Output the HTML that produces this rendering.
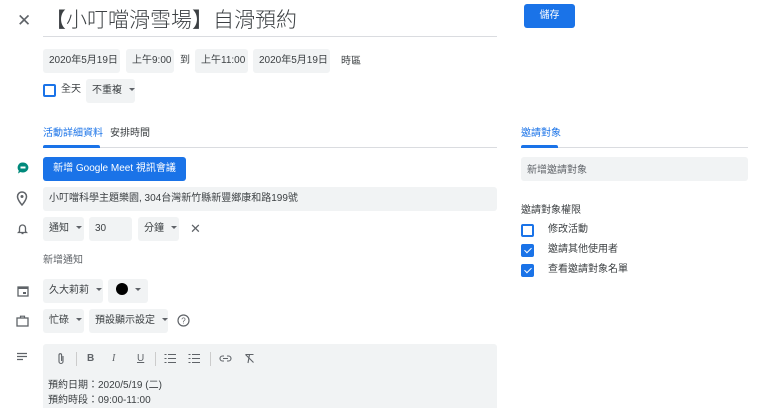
<!DOCTYPE html>
<html><head><meta charset="utf-8"><style>
*{margin:0;padding:0;box-sizing:border-box}
body{width:771px;height:408px;overflow:hidden;background:#fff;font-family:"Liberation Sans","Noto Sans CJK TC",sans-serif;color:#3c4043;position:relative;font-size:10px}
.a{position:absolute;line-height:12px;white-space:nowrap}
.chip{position:absolute;background:#f1f3f4;border-radius:3px;height:24px;line-height:24px;font-size:10px;padding-left:6px;color:#3c4043;white-space:nowrap}
.dd::after{content:"";display:inline-block;border:3px solid transparent;border-top:3px solid #5f6368;margin-left:7px;vertical-align:-1px}
.cb{position:absolute;width:13px;height:13px;border:2px solid #5f6368;border-radius:2px}
.cbb{border-color:#1a73e8}
.cbc{background:#1a73e8;border-color:#1a73e8}
.cbc::after{content:"";position:absolute;left:2.5px;top:0px;width:3px;height:6px;border:solid #fff;border-width:0 1.5px 1.5px 0;transform:rotate(45deg)}
svg{position:absolute}
</style></head><body>
<div class="a" style="left:17px;top:12px;font-size:17px;line-height:18px;color:#5f6368">✕</div>
<div class="a" style="left:45px;top:8px;font-size:21px;line-height:26px;color:#3c4043;font-weight:300">【小叮噹滑雪場】自滑預約</div>
<div class="a" style="left:43px;top:36px;width:454px;height:1px;background:#dadce0"></div>
<div class="a" style="left:524px;top:4px;width:51px;height:24px;background:#1a73e8;border-radius:3px;color:#fff;font-size:10px;line-height:24px;text-align:center">儲存</div>

<div class="chip" style="left:43px;top:49px;width:77px">2020年5月19日</div>
<div class="chip" style="left:126px;top:49px;width:48px">上午9:00</div>
<div class="a" style="left:180px;top:55px">到</div>
<div class="chip" style="left:195px;top:49px;width:53px">上午11:00</div>
<div class="chip" style="left:253px;top:49px;width:77px">2020年5月19日</div>
<div class="a" style="left:341px;top:56px">時區</div>

<div class="cb cbb" style="left:43px;top:84px"></div>
<div class="a" style="left:61px;top:84px">全天</div>
<div class="chip dd" style="left:86px;top:79px;width:49px">不重複</div>

<div class="a" style="left:43px;top:128px;color:#1a73e8">活動詳細資料</div>
<div class="a" style="left:110px;top:128px">安排時間</div>
<div class="a" style="left:43px;top:147px;width:454px;height:1px;background:#dadce0"></div>
<div class="a" style="left:43px;top:145px;width:57px;height:3px;background:#1a73e8;border-radius:2px 2px 0 0"></div>

<div class="a" style="left:521px;top:128px;color:#1a73e8">邀請對象</div>
<div class="a" style="left:521px;top:147px;width:227px;height:1px;background:#dadce0"></div>
<div class="a" style="left:521px;top:145px;width:37px;height:3px;background:#1a73e8;border-radius:2px 2px 0 0"></div>
<div class="chip" style="left:521px;top:157px;width:227px;color:#5f6368;padding-left:6px;line-height:28px">新增邀請對象</div>
<div class="a" style="left:521px;top:205px">邀請對象權限</div>
<div class="cb cbb" style="left:521px;top:224px"></div><div class="a" style="left:548px;top:224px">修改活動</div>
<div class="cb cbc" style="left:521px;top:244px"></div><div class="a" style="left:548px;top:244px">邀請其他使用者</div>
<div class="cb cbc" style="left:521px;top:264px"></div><div class="a" style="left:548px;top:264px">查看邀請對象名單</div>

<!-- icons -->
<svg style="left:16px;top:161px" width="14" height="14" viewBox="0 0 14 14"><path d="M7 1.5a5.5 5 0 1 1 -2.5 9.5l-2.5 1.5 .8-2.8A5 5 0 0 1 7 1.5z" fill="#00897b"/><rect x="4.5" y="5.5" width="5" height="2" fill="#fff"/></svg>
<svg style="left:16px;top:191px" width="12" height="15" viewBox="0 0 12 15"><path d="M6 1a4.5 4.5 0 0 0-4.5 4.5C1.5 9 6 14 6 14s4.5-5 4.5-8.5A4.5 4.5 0 0 0 6 1z" fill="none" stroke="#5f6368" stroke-width="1.5"/><circle cx="6" cy="5.5" r="1.5" fill="#5f6368"/></svg>
<svg style="left:17px;top:222px" width="11" height="13" viewBox="0 0 11 13"><path d="M2.5 9.5V6a3 3 0 0 1 6 0v3.5l1 1h-8z" fill="none" stroke="#5f6368" stroke-width="1.3"/><path d="M4.5 11.5h2" stroke="#5f6368" stroke-width="1.3"/></svg>
<svg style="left:17px;top:285px" width="12" height="12" viewBox="0 0 12 12"><rect x="1" y="2" width="10" height="9" fill="none" stroke="#5f6368" stroke-width="1.3"/><rect x="1" y="2" width="10" height="2" fill="#5f6368"/><rect x="6" y="7" width="3" height="2" fill="#5f6368"/></svg>
<svg style="left:16px;top:315px" width="13" height="12" viewBox="0 0 13 12"><rect x="1" y="3" width="11" height="8" fill="none" stroke="#5f6368" stroke-width="1.3"/><path d="M4.5 3V1.2h4V3" fill="none" stroke="#5f6368" stroke-width="1.2"/></svg>
<svg style="left:16px;top:352px" width="12" height="10" viewBox="0 0 12 10"><path d="M1 1.5h10M1 4.5h10M1 7.5h6" stroke="#5f6368" stroke-width="1.3"/></svg>

<div class="a" style="left:43px;top:157px;width:143px;height:24px;background:#1a73e8;border-radius:3px;color:#fff;font-size:10px;line-height:24px;text-align:center">新增 Google Meet 視訊會議</div>
<div class="chip" style="left:43px;top:187px;width:454px">小叮噹科學主題樂園, 304台灣新竹縣新豐鄉康和路199號</div>

<div class="chip dd" style="left:43px;top:217px;width:41px">通知</div>
<div class="chip" style="left:89px;top:217px;width:43px">30</div>
<div class="chip dd" style="left:138px;top:217px;width:41px">分鐘</div>
<div class="a" style="left:190px;top:222px;font-size:13px;line-height:14px;color:#5f6368">✕</div>
<div class="a" style="left:43px;top:255px;color:#5f6368">新增通知</div>

<div class="chip dd" style="left:43px;top:279px;width:60px">久大莉莉</div>
<div class="chip dd" style="left:108px;top:279px;width:40px"><span style="display:inline-block;width:12px;height:12px;border-radius:50%;background:#000;vertical-align:-2px;margin-left:2px"></span></div>
<div class="chip dd" style="left:43px;top:309px;width:41px">忙碌</div>
<div class="chip dd" style="left:89px;top:309px;width:79px">預設顯示設定</div>
<svg style="left:177px;top:314px" width="13" height="13" viewBox="0 0 13 13"><circle cx="6.5" cy="6.5" r="5.5" fill="none" stroke="#5f6368" stroke-width="1.2"/><text x="6.5" y="9.5" font-size="8" text-anchor="middle" fill="#5f6368" font-family="Liberation Sans">?</text></svg>

<div class="a" style="left:43px;top:344px;width:454px;height:64px;background:#f1f3f4;border-radius:3px 3px 0 0"></div>
<svg style="left:57px;top:352px" width="8" height="13" viewBox="0 0 8 13"><path d="M6 4v5.5a2 2 0 0 1-4 0V3a1.3 1.3 0 0 1 2.6 0v6" fill="none" stroke="#5f6368" stroke-width="1.1"/></svg>
<div class="a" style="left:76px;top:352px;width:1px;height:14px;background:#ccc"></div>
<div class="a" style="left:87px;top:353px;font-size:10px;font-weight:bold;color:#5f6368">B</div>
<div class="a" style="left:112px;top:353px;font-size:10px;font-style:italic;font-family:'Liberation Serif';color:#5f6368">I</div>
<div class="a" style="left:137px;top:353px;font-size:10px;text-decoration:underline;color:#5f6368">U</div>
<div class="a" style="left:155px;top:352px;width:1px;height:14px;background:#ccc"></div>
<svg style="left:164px;top:353px" width="12" height="11" viewBox="0 0 12 11"><path d="M4 1.5h8M4 5.5h8M4 9.5h8M0.5 1.5h2M0.5 5.5h2M0.5 9.5h2" stroke="#5f6368" stroke-width="1"/></svg>
<svg style="left:188px;top:353px" width="12" height="11" viewBox="0 0 12 11"><path d="M4 1.5h8M4 5.5h8M4 9.5h8M0.5 1.5h2M0.5 5.5h2M0.5 9.5h2" stroke="#5f6368" stroke-width="1"/></svg>
<div class="a" style="left:210px;top:352px;width:1px;height:14px;background:#ccc"></div>
<svg style="left:219px;top:355px" width="13" height="7" viewBox="0 0 13 7"><path d="M5 1H3.5a2.5 2.5 0 0 0 0 5H5M8 1h1.5a2.5 2.5 0 0 1 0 5H8M4 3.5h5" fill="none" stroke="#5f6368" stroke-width="1.1"/></svg>
<svg style="left:244px;top:353px" width="11" height="11" viewBox="0 0 11 11"><path d="M1.5 1.5h8M5.5 1.5L4 10M1.5 1.5l8 8" fill="none" stroke="#5f6368" stroke-width="1.1"/></svg>
<div class="a" style="left:48px;top:380px">預約日期：2020/5/19 (二)</div>
<div class="a" style="left:48px;top:395px">預約時段：09:00-11:00</div>
</body></html>
